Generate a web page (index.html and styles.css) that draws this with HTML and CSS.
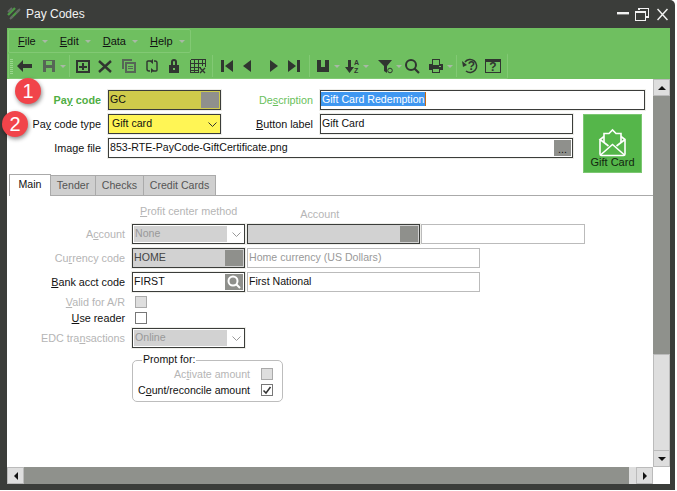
FILE: index.html
```html
<!DOCTYPE html>
<html lang="en">
<head>
  <meta charset="UTF-8">
  <title>Pay Codes</title>
  <link rel="stylesheet" href="styles.css">
</head>
<body>
<div class="window">

  <div class="titlebar">
    <svg class="app-logo" width="15" height="15" viewBox="0 0 15 15">
      <path d="M1 9 L8 2 M4 12 L12 4" stroke="#4d9a45" stroke-width="2.4"/>
      <path d="M3 13 L6 10 M9 7 L13 3 M1 6 L5 2" stroke="#666966" stroke-width="2"/>
    </svg>
    <span class="title-text">Pay Codes</span>
    <div class="win-btns">
      <svg class="win-min" width="12" height="12" viewBox="0 0 12 12"><rect x="0" y="4" width="12" height="2.4" fill="#f2f2f2"/></svg>
      <svg class="win-max" width="14" height="13" viewBox="0 0 14 13" shape-rendering="crispEdges"><path d="M4 2V0.5H13.5V9H11M0.5 4H10.5V12.5H0.5Z M0.5 4.5H10.5" fill="none" stroke="#f2f2f2" stroke-width="1.4"/></svg>
      <svg class="win-close" width="11" height="13" viewBox="0 0 11 13"><path d="M0.500 1L10.500 12M10.500 1L0.500 12" stroke="#f2f2f2" stroke-width="1.500"/></svg>
    </div>
  </div>

  <div class="bars">
    <div class="menubar">
      <span class="grip"></span>
      <span class="menu-item"><u>F</u>ile<i class="caret"></i></span>
      <span class="menu-item"><u>E</u>dit<i class="caret"></i></span>
      <span class="menu-item"><u>D</u>ata<i class="caret"></i></span>
      <span class="menu-item"><u>H</u>elp<i class="caret"></i></span>
    </div>
    <div class="toolbar">
      <span class="grip"></span>
      <svg class="tb tb-back" viewBox="0 0 16 16"><path d="M0 8L6 2V6H15V10H6V14Z"/></svg>
      <svg class="tb tb-save dim" viewBox="0 0 16 16"><path fill-rule="evenodd" d="M2 2H14V14H2ZM5 3V7H11V3ZM5 10V14H11V10Z"/></svg>
      <i class="caret tb-drop"></i>
      <i class="tb-sep"></i>
      <svg class="tb tb-add" viewBox="0 0 16 16"><path fill-rule="evenodd" d="M1 2H15V15H1ZM3 4V13H13V4ZM7 5H9V8H12V10H9V12H7V10H4V8H7Z"/></svg>
      <svg class="tb tb-del" viewBox="0 0 16 16"><path d="M2 3L14 14M14 3L2 14" stroke="#303530" stroke-width="2.4"/></svg>
      <svg class="tb tb-copy dim" viewBox="0 0 16 16"><path fill-rule="evenodd" d="M1 1H11V3H3V11H1ZM4 4H15V15H4ZM6 6V13H13V6ZM7 8H12V9H7ZM7 10H12V11H7Z"/></svg>
      <svg class="tb tb-sync" viewBox="0 0 16 16"><path d="M7 3H4Q3 3 3 4V11Q3 13 5 13H6M9 13H12Q13 13 13 12V5Q13 3 11 3H10" fill="none" stroke="#303530" stroke-width="1.4"/><path d="M9 1L6 3.500L9 6ZM7 10L10 12.500L7 15Z"/></svg>
      <svg class="tb tb-lock" viewBox="0 0 16 16"><path fill-rule="evenodd" d="M5 7V4Q5 1 8 1T11 4V7H13V15H3V7ZM7 7H9V4Q9 3 8 3T7 4ZM7 10V12H9V10Z"/></svg>
      <svg class="tb tb-grid" viewBox="0 0 16 16" shape-rendering="crispEdges"><path d="M0.500 1.500H15.500V9M0.500 1.500V14.500H9M0.500 5.500H15.500M0.500 9.500H11M0.500 12.500H9M4.500 1.500V14.500M8.500 1.500V14.500M12.500 1.500V8" fill="none" stroke="#303530"/><path d="M10 10L15 15M15 10L10 15" stroke="#303530" stroke-width="1.4" shape-rendering="auto"/></svg>
      <i class="tb-sep sep-b"></i>
      <svg class="tb tb-first" viewBox="0 0 16 16"><path d="M2 2H5V14H2ZM14 2V14L6 8Z"/></svg>
      <svg class="tb tb-prev" viewBox="0 0 16 16"><path d="M12 2V14L4 8Z"/></svg>
      <svg class="tb tb-next" viewBox="0 0 16 16"><path d="M4 2V14L12 8Z"/></svg>
      <svg class="tb tb-last" viewBox="0 0 16 16"><path d="M2 2V14L10 8ZM11 2H14V14H11Z"/></svg>
      <i class="tb-sep sep-c"></i>
      <svg class="tb tb-saveas" viewBox="0 0 16 16"><path d="M2 2H6V9H10V2H14V14H2Z"/></svg>
      <i class="caret tb-drop"></i>
      <svg class="tb tb-sort" viewBox="0 0 16 16"><path d="M4 2H7V9H10L5.500 15L1 9H4Z"/><text x="10" y="7" class="tiny">A</text><text x="10" y="15" class="tiny">Z</text></svg>
      <i class="caret tb-drop"></i>
      <svg class="tb tb-filter" viewBox="0 0 16 16"><path d="M1 2H15L10 8V15L7 13V8Z"/><circle cx="13" cy="12.500" r="2.300" fill="none" stroke="#303530"/></svg>
      <i class="caret tb-drop"></i>
      <svg class="tb tb-find" viewBox="0 0 16 16"><circle cx="7" cy="7" r="5" fill="none" stroke="#303530" stroke-width="2"/><path d="M10.500 10.500L15 15" stroke="#303530" stroke-width="2.200"/></svg>
      <svg class="tb tb-print" viewBox="0 0 16 16"><path fill-rule="evenodd" d="M4 1H12V6H15V12H12V15H4V12H1V6H4ZM5 2V7H11V2ZM5 11V14H11V11ZM11 8V9H13V8Z"/></svg>
      <i class="caret tb-drop"></i>
      <i class="tb-sep sep-d"></i>
      <svg class="tb tb-help" viewBox="0 0 16 16"><path d="M3 4A6.500 6.500 0 1 1 4 13" fill="none" stroke="#303530" stroke-width="1.500"/><path d="M0 3L5 7L1 9Z"/><text x="9.500" y="12" class="tiny q">?</text></svg>
      <svg class="tb tb-manual" viewBox="0 0 16 16" shape-rendering="crispEdges"><path d="M1 1H15V4H1Z"/><path d="M0.500 1.500H15.500V14.500H0.500Z" fill="none" stroke="#303530"/><text x="8" y="13" class="tiny q">?</text></svg>
    </div>
  </div>

  <div class="client">
    <div class="content">

      <div class="head-form">
        <label class="lbl lbl-required">Pa<u>y</u> code</label>
        <div class="field fld-code">GC<i class="fld-btn"></i></div>
        <label class="lbl lbl-green">De<u>s</u>cription</label>
        <div class="field fld-desc"><span class="selected">Gift Card Redemption</span></div>

        <label class="lbl">Pa<u>y</u> code type</label>
        <div class="field fld-type">Gift card
          <svg class="chev" width="9" height="6" viewBox="0 0 9 6"><path d="M0.500 0.500L4.500 4.500L8.500 0.500" fill="none" stroke="#333"/></svg>
        </div>
        <label class="lbl"><u>B</u>utton label</label>
        <div class="field fld-label">Gift Card</div>
        <div class="gift-btn">
          <svg width="29" height="29" viewBox="0 0 29 29" fill="none" stroke="#fff" stroke-width="1.600">
            <path d="M2 11.500V26Q2 27.500 3.500 27.500H25.500Q27 27.500 27 26V11.500L23 8.500M6 8.500L2 11.500L10.500 18M27 11.500L18.500 18"/>
            <path d="M6 14V5.500H11L14.500 2L18 5.500H23V14"/>
            <path d="M2.500 27L14.500 16.500L26.500 27"/>
          </svg>
          <span>Gift Card</span>
        </div>

        <label class="lbl">Ima<u>g</u>e file</label>
        <div class="field fld-image">853-RTE-PayCode-GiftCertificate.png<i class="fld-btn dots">...</i></div>
      </div>

      <div class="tabs">
        <span class="tab tab-on">Main</span>
        <span class="tab tab-tender">Tender</span>
        <span class="tab tab-checks">Checks</span>
        <span class="tab tab-cards">Credit Cards</span>
        <span class="tab-rest"></span>
      </div>

      <div class="panel">
        <div class="col-heads">
          <span class="head-method"><u>P</u>rofit center method</span>
          <span class="head-account">Account</span>
        </div>

        <div class="row">
          <label class="lbl off">A<u>c</u>count</label>
          <div class="field fld-off-select"><span class="off-fill">None</span>
            <svg class="chev" width="9" height="6" viewBox="0 0 9 6"><path d="M0.500 0.500L4.500 4.500L8.500 0.500" fill="none" stroke="#999"/></svg>
          </div>
          <div class="field fld-off fld-acct"><i class="fld-btn"></i></div>
          <div class="field fld-plain fld-acct-name"></div>
        </div>
        <div class="row">
          <label class="lbl off">Cu<u>r</u>rency code</label>
          <div class="field fld-off fld-w113">HOME<i class="fld-btn"></i></div>
          <div class="field fld-plain fld-wide off-text">Home currency (US Dollars)</div>
        </div>
        <div class="row">
          <label class="lbl"><u>B</u>ank acct code</label>
          <div class="field fld-w113">FIRST
            <i class="fld-btn">
              <svg width="14" height="14" viewBox="0 0 14 14" fill="none" stroke="#fff" stroke-width="2"><circle cx="6" cy="6" r="4.500"/><path d="M9.500 9.500L13 13"/></svg>
            </i>
          </div>
          <div class="field fld-plain fld-wide">First National</div>
        </div>
        <div class="row row-check">
          <label class="lbl off"><u>V</u>alid for A/R</label>
          <i class="check check-off"></i>
        </div>
        <div class="row row-check">
          <label class="lbl"><u>U</u>se reader</label>
          <i class="check"></i>
        </div>
        <div class="row">
          <label class="lbl off">EDC tra<u>n</u>sactions</label>
          <div class="field fld-off-select"><span class="off-fill">Online</span>
            <svg class="chev" width="9" height="6" viewBox="0 0 9 6"><path d="M0.500 0.500L4.500 4.500L8.500 0.500" fill="none" stroke="#999"/></svg>
          </div>
        </div>

        <div class="group">
          <div class="group-title">Prompt for:</div>
          <div class="group-row">
            <span class="off">Ac<u>t</u>ivate amount</span>
            <i class="check check-off"></i>
          </div>
          <div class="group-row">
            <span>C<u>o</u>unt/reconcile amount</span>
            <i class="check">
              <svg width="10" height="10" viewBox="0 0 10 10"><path d="M1.500 5.500L4 8L8.500 2" fill="none" stroke="#333" stroke-width="1.500"/></svg>
            </i>
          </div>
        </div>
      </div>
    </div>

    <div class="vscroll">
      <span class="sb-btn"><i class="tri tri-up"></i></span>
      <span class="sb-track"></span>
      <span class="sb-thumb"></span>
      <span class="sb-btn"><i class="tri tri-down"></i></span>
    </div>
  </div>

  <div class="hscroll">
    <span class="sb-btn"><i class="tri tri-left"></i></span>
    <span class="sb-track"></span>
    <span class="sb-thumb-h"></span>
    <span class="sb-btn"><i class="tri tri-right"></i></span>
    <span class="sb-corner"></span>
  </div>

  <span class="badge badge-1">1</span>
  <span class="badge badge-2">2</span>
</div>
</body>
</html>
```

FILE: styles.css
```css
* {
  box-sizing: border-box;
}

body {
  margin: 0;
  background: white;
  font-family: "Liberation Sans", Arial, sans-serif;
  font-size: 10.6px;
  color: #111;
}

i {
  font-style: normal;
}

.window {
  position: relative;
  width: 675px;
  height: 490px;
  padding: 0 5px 6px 7px;
  background: #3b3d3a;
  border-radius: 0 5px 0 0;
  display: flex;
  flex-direction: column;
}

/* title bar */
.titlebar {
  height: 28px;
  display: flex;
  align-items: center;
  color: #f2f2f2;
  font-size: 12px;
}

.app-logo {
  margin-top: -1px;
}

.title-text {
  margin-left: 4px;
  margin-top: -1px;
}

.win-btns {
  margin-left: auto;
  margin-right: 2px;
  display: flex;
  align-items: center;
}

.win-max {
  margin-left: 6px;
}

.win-close {
  margin-left: 8px;
}

/* menu + toolbar */
.bars {
  height: 51px;
  background: #6fbf60;
  padding: 1px 0 0 1px;
}

.menubar,
.toolbar {
  border: 1px solid #82c974;
  border-radius: 2px;
  display: flex;
  align-items: center;
  padding-left: 1px;
  font-size: 11px;
}

.menubar {
  width: 183px;
  height: 24px;
}

.menubar .grip {
  margin-right: 8px;
}

.toolbar {
  width: 500px;
  height: 26px;
  border-top-color: transparent;
}

.grip {
  width: 3px;
  height: 15px;
  background: repeating-linear-gradient(#9ad68e 0 1px, #6fbf60 1px 2px);
}

.menu-item {
  margin-right: 12px;
  display: flex;
  align-items: center;
  color: #111;
}

.caret {
  width: 0;
  height: 0;
  margin-left: 6px;
  border: 3px solid transparent;
  border-top: 3px solid #a9b9a6;
  border-bottom: 0;
}

.tb {
  width: 16px;
  height: 16px;
  flex: none;
  fill: #303530;
}

.tb.dim {
  fill: #566656;
}

.tiny {
  font-size: 7px;
  font-weight: bold;
  fill: #303530;
}

.q {
  font-size: 12px;
  text-anchor: middle;
}

.tb-drop {
  margin-left: 3px;
  flex: none;
}

.tb-sep {
  width: 1px;
  height: 22px;
  margin-left: 3px;
  background: #82c974;
  flex: none;
}

.tb-back { margin-left: 4px; }
.tb-save { margin-left: 8px; }
.tb-add { margin-left: 5px; }
.tb-del { margin-left: 6px; }
.tb-copy { margin-left: 8px; }
.tb-sync { margin-left: 7px; }
.tb-lock { margin-left: 6px; }
.tb-grid { margin-left: 8px; }
.sep-b { margin-left: 6px; }
.tb-first { margin-left: 6px; }
.tb-prev { margin-left: 4px; }
.tb-next { margin-left: 11px; }
.tb-last { margin-left: 4px; }
.sep-c { margin-left: 7px; }
.tb-saveas { margin-left: 5px; }
.tb-sort { margin-left: 4px; }
.tb-filter { margin-left: 8px; }
.tb-find { margin-left: 2px; }
.tb-print { margin-left: 8px; }
.tb-help { margin-left: 5px; }
.tb-manual { margin-left: 7px; }

/* white client area */
.client {
  flex: 1;
  display: flex;
  min-height: 0;
}

.content {
  flex: 1;
  background: #fff;
}

.head-form {
  padding-top: 11px;
  display: grid;
  grid-template-columns: 101px 113px 99px 253px 72px;
  grid-template-rows: 20px 20px 20px 11px;
  row-gap: 4px;
  align-items: center;
}

.lbl {
  font-size: 10.8px;
  text-align: right;
  padding-right: 7px;
  white-space: nowrap;
}

.lbl-required {
  color: #4fae44;
  font-weight: bold;
}

.lbl-green {
  color: #6abf5c;
}

.field {
  position: relative;
  height: 20px;
  border: 1px solid #3b3d3a;
  box-shadow: 0 0 0 1px #eeeeea;
  background: #fff;
  padding-left: 1px;
  line-height: 17px;
  white-space: nowrap;
}

.fld-btn {
  position: absolute;
  right: 1px;
  top: 1px;
  bottom: 1px;
  width: 18px;
  background: #8f908c;
  display: flex;
  align-items: center;
  justify-content: center;
  overflow: hidden;
}

.chev {
  position: absolute;
  right: 3px;
  top: 7px;
}

.fld-code {
  background: #cfcb4b;
}

.fld-desc {
  grid-column: 4 / 6;
  padding-left: 0;
}

.selected {
  display: block;
  width: max-content;
  background: #3f97f0;
  color: #fff;
  height: 14px;
  line-height: 14px;
  margin-top: 1px;
  padding: 0 1px;
  border-right: 1px solid #c96a10;
}

.fld-type {
  background: #fff555;
  padding-left: 3px;
}

.fld-image {
  grid-column: 2 / 5;
}

.dots {
  width: 17px;
  color: #111;
  line-height: 10px;
  align-items: flex-end;
  padding-bottom: 2px;
}

.gift-btn {
  grid-column: 5;
  grid-row: 2 / 5;
  width: 59px;
  height: 59px;
  margin-left: 10px;
  background: #55b64a;
  border: 1px solid #7cc772;
  color: #12260f;
  font-size: 11px;
  text-align: center;
  padding-top: 13px;
  white-space: nowrap;
}

.gift-btn svg {
  display: block;
  margin: 0 auto -1px;
}

.tabs {
  display: flex;
  height: 22px;
  margin-top: 1px;
  padding-left: 2px;
}

.tab {
  border: 1px solid #aaa;
  border-left-width: 0;
  background: #cfcfcf;
  color: #555;
  text-align: center;
  padding-top: 3px;
  margin-top: 1px;
  height: 21px;
}

.tab-on {
  width: 42px;
  background: #fff;
  color: #111;
  margin-top: 0;
  height: 22px;
  padding-top: 3px;
  border-left-width: 1px;
  border-bottom: 0;
}

.tab-tender {
  width: 45px;
}

.tab-checks {
  width: 48px;
}

.tab-cards {
  width: 72px;
}

.tab-rest {
  flex: 1;
  border-bottom: 1px solid #aaa;
}

.panel {
  display: flex;
  flex-direction: column;
}

.col-heads {
  height: 28px;
  font-size: 10.8px;
  color: #b5b5b5;
  display: flex;
  align-items: flex-start;
}

.head-method {
  margin-left: 133px;
  margin-top: 9px;
}

.head-account {
  margin-left: 63px;
  margin-top: 12px;
}

.row {
  display: flex;
  gap: 2px;
  height: 20px;
  margin-bottom: 4px;
  align-items: center;
}

.row-check {
  height: 12px;
}

.row .lbl {
  width: 125px;
  margin-right: -2px;
  padding-right: 7px;
}

.off {
  color: #b5b5b5;
}

.off-text {
  color: #999;
}

.fld-w113 {
  width: 113px;
}

.fld-off {
  background: #d2d2d2;
  color: #444;
}

.fld-off-select {
  width: 113px;
  padding: 0;
}

.off-fill {
  display: block;
  width: 93px;
  height: 16px;
  margin: 1px;
  background: #d2d2d2;
  color: #999;
  padding-left: 1px;
  line-height: 14px;
}

.fld-acct {
  width: 173px;
}

.fld-plain {
  border-color: #bbb;
  box-shadow: none;
}

.fld-wide {
  width: 233px;
}

.fld-acct-name {
  width: 164px;
  margin-left: -1px;
}

.check {
  width: 12px;
  height: 12px;
  margin-left: 3px;
  border: 1px solid #777;
  background: #fff;
  display: flex;
  align-items: center;
  justify-content: center;
}

.check-off {
  background: #dedede;
  border-color: #aaa;
}

.group {
  width: 151px;
  height: 42px;
  margin: 8px 0 0 125px;
  border: 1px solid #bdbdbd;
  border-radius: 5px;
}

.group-title {
  width: max-content;
  margin: -8px 0 0 9px;
  padding: 0 1px;
  background: #fff;
  line-height: 13px;
}

.group-row {
  display: flex;
  justify-content: flex-end;
  align-items: center;
  height: 16px;
  padding-right: 9px;
}

.group-row .check {
  margin-left: 11px;
}

/* scrollbars */
.vscroll {
  width: 17px;
  display: flex;
  flex-direction: column;
}

.hscroll {
  height: 17px;
  display: flex;
}

.sb-btn {
  flex: none;
  width: 17px;
  height: 17px;
  background: #dedede;
  border: 1px solid #bbb;
  display: flex;
  align-items: center;
  justify-content: center;
}

.sb-track {
  flex: 1;
  background: #8f918c;
}

.sb-thumb {
  height: 96px;
  background: #dedede;
  border: 1px solid #bbb;
  border-bottom: 0;
}

.sb-thumb-h {
  width: 7px;
  background: #dedede;
}

.sb-corner {
  width: 17px;
  background: #fff;
}

.tri {
  width: 0;
  height: 0;
  border: 4px solid transparent;
}

.tri-up {
  border-top: 0;
  border-bottom-color: #111;
}

.tri-down {
  border-bottom: 0;
  border-top-color: #111;
}

.tri-left {
  border-left: 0;
  border-right-color: #111;
}

.tri-right {
  border-right: 0;
  border-left-color: #111;
}

/* numbered callouts over the form */
.badge {
  position: absolute;
  width: 26px;
  height: 26px;
  border-radius: 50%;
  background: #f1444a;
  color: #fff;
  font-size: 20px;
  line-height: 26px;
  text-align: center;
  box-shadow: 1px 2px 4px rgba(0, 0, 0, 0.45);
}

.badge-1 {
  left: 15px;
  top: 78px;
}

.badge-2 {
  left: 2px;
  top: 111px;
}
```
